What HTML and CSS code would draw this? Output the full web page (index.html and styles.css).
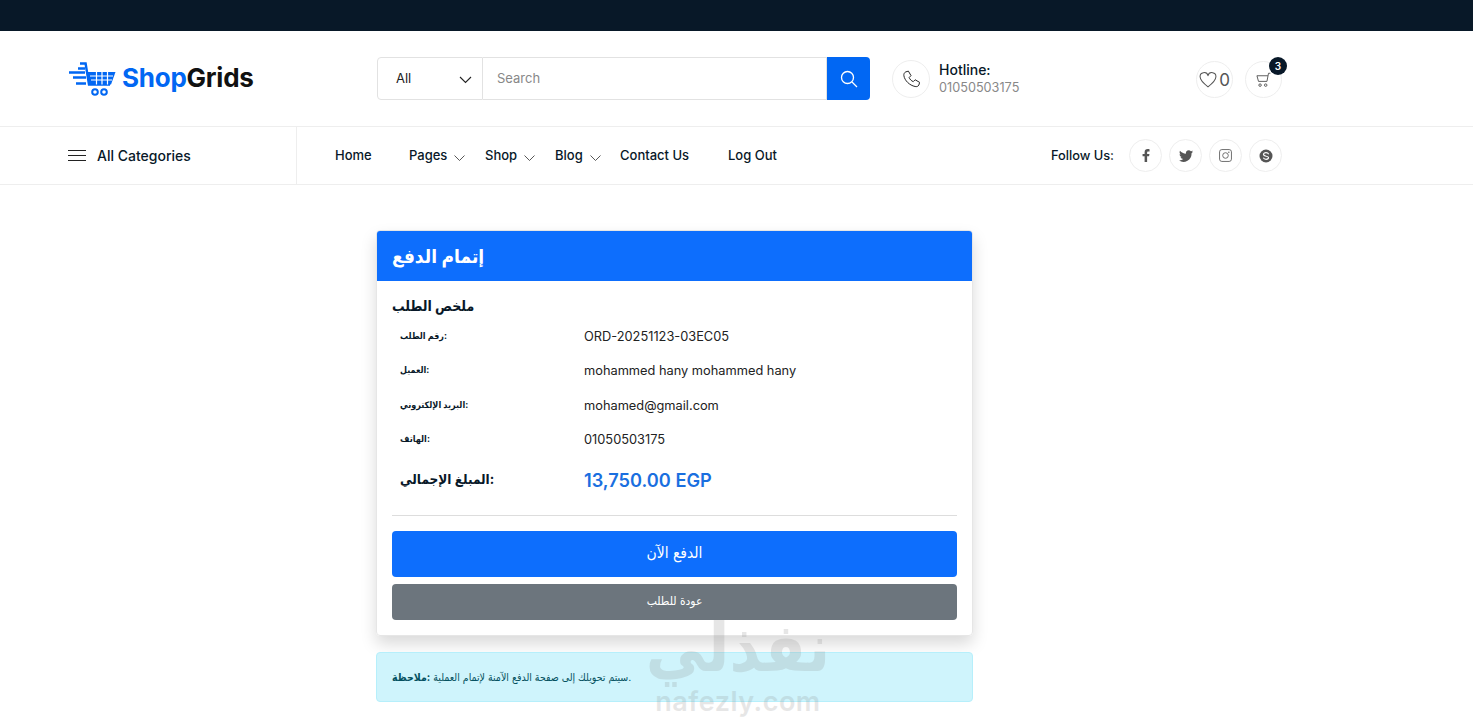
FILE: index.html
```html
<!DOCTYPE html>
<html lang="ar">
<head>
    <meta charset="UTF-8">
    <meta name="viewport" content="width=device-width, initial-scale=1.0">
    <title>ShopGrids</title>
    <link rel="stylesheet" href="styles.css">
</head>
<body>
    <div class="topbar"></div>

    <header class="header-middle">
        <a class="logo" href="#">
            <svg class="logo-cart" width="47" height="35" viewBox="0 0 47 35" fill="none">
                <path d="M11 1.500h5.600L20 22.500h21" stroke="#0167f3" stroke-width="2.400"/>
                <path d="M18 10h28.500L42 22.500H20.500z" fill="#0167f3"/>
                <path d="M21 14h23M22 18h21M27.500 10v12.500M33 10v12.500M38.500 10v12.500" stroke="#fff" stroke-width="1.200"/>
                <path d="M9 6.500h7M0 10.500h16M4 15.500h13M7 21.500h10" stroke="#0167f3" stroke-width="2.400"/>
                <circle cx="26" cy="30" r="2.800" stroke="#0167f3" stroke-width="2"/>
                <circle cx="35" cy="30" r="2.800" stroke="#0167f3" stroke-width="2"/>
            </svg>
            <span class="logo-text"><span class="logo-blue">Shop</span>Grids</span>
        </a>

        <form class="search">
            <div class="search-select">
                <span>All</span>
                <svg class="select-arrow" width="13" height="8" viewBox="0 0 13 8" fill="none"><path d="M1 1l5.500 5.500L12 1" stroke="#222" stroke-width="1.100"/></svg>
            </div>
            <input class="search-input" type="text" placeholder="Search">
            <button class="search-btn" type="button" aria-label="Search">
                <svg width="18" height="18" viewBox="0 0 18 18" fill="none"><circle cx="7.500" cy="7.500" r="6" stroke="#fff" stroke-width="1.300"/><path d="M12 12l5 5" stroke="#fff" stroke-width="1.300"/></svg>
            </button>
        </form>

        <div class="hotline">
            <span class="circle circle-lg">
                <svg width="18" height="18" viewBox="0 0 24 24" fill="none"><path d="M5 2.500l3.500-1 3.500 6-2.500 2.500c1 2.500 3 4.500 5.500 5.500l2.500-2.500 6 3.500-1 3.500c-1 2-3 2.500-5 2C10 20.500 3.500 14 2.500 7.500 2.200 5.500 3 3.500 5 2.500z" stroke="#222" stroke-width="1.300" stroke-linejoin="round"/></svg>
            </span>
            <div class="hotline-text">
                <div class="hotline-title">Hotline:</div>
                <div class="hotline-number">01050503175</div>
            </div>
        </div>

        <div class="header-actions">
            <a class="circle circle-md" href="#">
                <svg width="18" height="16" viewBox="0 0 24 22" fill="none"><path d="M12 20.500C5 15 1.200 11.500 1.200 7A5.500 5.500 0 0 1 12 5a5.500 5.500 0 0 1 10.800 2c0 4.500-3.800 8-10.800 13.500z" stroke="#555" stroke-width="1.400" stroke-linejoin="round"/></svg>
                <span class="wish-count">0</span>
            </a>
            <a class="circle circle-md cart" href="#">
                <svg width="15" height="15" viewBox="0 0 24 24" fill="none"><path d="M23 2h-3l-2.500 13H4L1.500 6H19" stroke="#555" stroke-width="1.500"/><circle cx="6.500" cy="21" r="2" stroke="#555" stroke-width="1.500"/><circle cx="15.500" cy="21" r="2" stroke="#555" stroke-width="1.500"/></svg>
                <span class="badge">3</span>
            </a>
        </div>
    </header>

    <nav class="navbar">
        <div class="all-cats">
            <span class="burger"><i></i><i></i><i></i></span>
            All Categories
        </div>
        <ul class="menu">
            <li class="w-home"><a href="#">Home</a></li>
            <li class="w-pages"><a href="#">Pages</a><svg class="caret" width="11" height="6" viewBox="0 0 11 6" fill="none"><path d="M.5.500l5 5 5-5" stroke="#444" stroke-width=".9"/></svg></li>
            <li class="w-shop"><a href="#">Shop</a><svg class="caret" width="11" height="6" viewBox="0 0 11 6" fill="none"><path d="M.5.500l5 5 5-5" stroke="#444" stroke-width=".9"/></svg></li>
            <li class="w-blog"><a href="#">Blog</a><svg class="caret" width="11" height="6" viewBox="0 0 11 6" fill="none"><path d="M.5.500l5 5 5-5" stroke="#444" stroke-width=".9"/></svg></li>
            <li class="w-contact"><a href="#">Contact Us</a></li>
            <li><a href="#">Log Out</a></li>
        </ul>
        <div class="follow">
            <span class="follow-label">Follow Us:</span>
            <a class="circle circle-sm" href="#">
                <svg width="8" height="13" viewBox="0 0 8 14"><path d="M5.200 14V7.800h2.100l.4-2.500H5.200V3.800c0-.8.300-1.200 1.300-1.200h1.300V.300C7.500.200 6.700 0 5.800 0 3.800 0 2.500 1.200 2.500 3.400v1.900H.3v2.500h2.200V14z" fill="#555"/></svg>
            </a>
            <a class="circle circle-sm" href="#">
                <svg width="14" height="12" viewBox="0 0 24 20"><path d="M24 2.400c-.9.400-1.800.7-2.800.8 1-.6 1.800-1.600 2.200-2.700-1 .6-2 1-3.100 1.200A4.900 4.900 0 0 0 11.900 6C7.800 5.800 4.200 3.800 1.700.9.400 3.100 1 6 3.200 7.500c-.8 0-1.600-.2-2.200-.6 0 2.300 1.600 4.400 3.900 4.900-.7.200-1.500.2-2.200.1.600 2 2.400 3.400 4.600 3.400A9.900 9.900 0 0 1 0 17.800 14 14 0 0 0 21.500 5.400c1-.7 1.800-1.600 2.500-3z" fill="#555"/></svg>
            </a>
            <a class="circle circle-sm" href="#">
                <svg width="13" height="13" viewBox="0 0 14 14" fill="none"><rect x=".6" y=".6" width="12.800" height="12.800" rx="2.500" stroke="#666" stroke-width="1"/><circle cx="7" cy="7" r="3" stroke="#666" stroke-width="1"/><circle cx="10.600" cy="3.400" r=".8" fill="#666"/></svg>
            </a>
            <a class="circle circle-sm" href="#">
                <svg width="14" height="14" viewBox="0 0 14 14"><circle cx="7" cy="7" r="6.500" fill="#555"/><path d="M9.700 5.200C9.200 4.200 8.100 3.700 7 3.700 5.500 3.700 4.500 4.500 4.500 5.600c0 2.200 5 1.100 5 3 0 1-1.100 1.700-2.400 1.700-1.300 0-2.300-.6-2.800-1.500" stroke="#fff" stroke-width="1.200" fill="none"/></svg>
            </a>
        </div>
    </nav>

    <main class="checkout">
        <section class="card">
            <h3 class="card-header">إتمام الدفع</h3>
            <div class="card-body">
                <h5 class="summary-title">ملخص الطلب</h5>
                <table class="summary">
                    <tr><th>رقم الطلب:</th><td>ORD-20251123-03EC05</td></tr>
                    <tr><th>العميل:</th><td>mohammed hany mohammed hany</td></tr>
                    <tr><th>البريد الإلكتروني:</th><td>mohamed@gmail.com</td></tr>
                    <tr><th>الهاتف:</th><td>01050503175</td></tr>
                    <tr class="total"><th>المبلغ الإجمالي:</th><td>13,750.00 EGP</td></tr>
                </table>
                <hr class="divider">
                <button class="btn btn-pay" type="button">الدفع الآن</button>
                <button class="btn btn-back" type="button">عودة للطلب</button>
            </div>
        </section>

        <div class="alert"><strong>ملاحظة:</strong> سيتم تحويلك إلى صفحة الدفع الآمنة لإتمام العملية.</div>
    </main>

    <div class="watermark">
        <div class="wm-ar">نفذلي</div>
        <div class="wm-en">nafezly.com</div>
    </div>
</body>
</html>
```

FILE: styles.css
```css
* {
    box-sizing: border-box;
}

body {
    margin: 0;
    height: 717px;
    overflow: hidden;
    position: relative;
    font-family: Inter, "DejaVu Sans Condensed", "DejaVu Sans", sans-serif;
    color: #081828;
    background: #fff;
}

a {
    color: inherit;
    text-decoration: none;
}

.topbar {
    height: 31px;
    background-color: #081828;
}

/* Middle header */
.header-middle {
    height: 96px;
    padding: 0 191px 0 68px;
    display: flex;
    align-items: center;
    border-bottom: 1px solid #eee;
}

.logo {
    width: 309px;
    padding-left: 1px;
    display: flex;
    align-items: center;
    gap: 6px;
    flex-shrink: 0;
}

.logo-cart {
    margin-top: 2px;
}

.logo-text {
    font-size: 26px;
    line-height: 30px;
    font-weight: 700;
    color: #111;
    letter-spacing: -0.25px;
    margin-bottom: 2px;
}

.logo-blue {
    color: #0167f3;
}

.search {
    width: 493px;
    height: 43px;
    display: flex;
    flex-shrink: 0;
}

.search-select {
    width: 106px;
    padding: 0 10px 2px 18px;
    display: flex;
    align-items: center;
    justify-content: space-between;
    border: 1px solid #e2e2e2;
    border-radius: 4px 0 0 4px;
    font-size: 13px;
    color: #222;
}

.select-arrow {
    margin-top: 5px;
}

.search-input {
    flex: 1;
    min-width: 0;
    padding: 0 14px 2px;
    border: 1px solid #e2e2e2;
    border-left: none;
    font-family: inherit;
    font-size: 13px;
    outline: none;
}

.search-input::placeholder {
    color: #888;
}

.search-btn {
    width: 43px;
    border: none;
    border-radius: 0 4px 4px 0;
    background-color: #0167f3;
    display: flex;
    align-items: center;
    justify-content: center;
}

.circle {
    border: 1px solid #eee;
    border-radius: 50%;
    display: flex;
    align-items: center;
    justify-content: center;
    flex-shrink: 0;
}

.circle-lg {
    width: 38px;
    height: 38px;
}

.circle-md {
    width: 37px;
    height: 37px;
}

.circle-sm {
    width: 33px;
    height: 33px;
}

.hotline {
    margin-left: 22px;
    display: flex;
    align-items: center;
    gap: 9px;
}

.hotline-text {
    margin-top: 1px;
}

.hotline-title {
    font-size: 14px;
    font-weight: 500;
    line-height: 18px;
}

.hotline-number {
    font-size: 12.700px;
    line-height: 18px;
    color: #888;
}

.header-actions {
    margin-left: auto;
    display: flex;
    gap: 12px;
    margin-top: 2px;
}

.wish-count {
    font-size: 17px;
    color: #555;
    margin-left: 2px;
}

.cart {
    position: relative;
}

.badge {
    position: absolute;
    top: -5px;
    right: -6px;
    width: 18px;
    height: 18px;
    border-radius: 50%;
    background-color: #081828;
    color: #fff;
    font-size: 10px;
    font-weight: 600;
    display: flex;
    align-items: center;
    justify-content: center;
}

/* Nav row */
.navbar {
    height: 58px;
    padding: 0 191px 0 68px;
    display: flex;
    align-items: center;
    border-bottom: 1px solid #eee;
}

.all-cats {
    width: 229px;
    height: 100%;
    display: flex;
    align-items: center;
    gap: 11px;
    border-right: 1px solid #eee;
    font-size: 14px;
    font-weight: 500;
}

.burger {
    width: 18px;
    display: flex;
    flex-direction: column;
    gap: 4px;
}

.burger i {
    height: 1px;
    background-color: #222;
}

.menu {
    list-style: none;
    margin: 0 0 2px;
    padding: 0 0 0 38px;
    display: flex;
    font-size: 13px;
    font-weight: 500;
}

.menu li {
    display: flex;
    align-items: center;
    gap: 7px;
}

.caret {
    margin-top: 7px;
}

.w-home { width: 74px; }
.w-pages { width: 76px; }
.w-shop { width: 70px; }
.w-blog { width: 65px; }
.w-contact { width: 108px; }

.follow {
    margin-left: auto;
    display: flex;
    align-items: center;
    gap: 7px;
}

.follow-label {
    font-size: 12.800px;
    font-weight: 500;
    margin-right: 8px;
}

/* Checkout */
.checkout {
    width: 597px;
    margin: 45px 0 0 376px;
}

.card {
    border: 1px solid #e6e6e6;
    border-radius: 4px;
    overflow: hidden;
    height: 406px;
    box-shadow: 0 8px 16px rgba(0, 0, 0, 0.15);
}

.card-header {
    margin: 0;
    height: 50px;
    padding: 0 15px;
    display: flex;
    align-items: center;
    background-color: #0d6efd;
    color: #fff;
    font-size: 19px;
    font-weight: 700;
}

.card-body {
    padding: 15px;
}

.summary-title {
    margin: 0 0 3px;
    font-size: 14px;
    line-height: 20px;
    font-weight: 700;
}

.summary {
    width: 100%;
    border-collapse: collapse;
}

.summary th {
    width: 192px;
    height: 34.500px;
    padding: 0 8px 2px;
    text-align: left;
    font-size: 9px;
    font-weight: 700;
}

.summary td {
    padding: 0;
    font-size: 12.800px;
    color: #222;
}

.total th {
    height: 45px;
    font-size: 13.500px;
}

.total td {
    font-size: 18.200px;
    font-weight: 600;
    color: #1a6fe0;
}

.divider {
    margin: 13px 0 15px;
    border: none;
    border-top: 1px solid #ddd;
}

.btn {
    display: block;
    width: 100%;
    border: none;
    border-radius: 4px;
    color: #fff;
    font-family: inherit;
}

.btn-pay {
    height: 46px;
    padding-bottom: 4px;
    background-color: #0d6efd;
    font-size: 15.500px;
}

.btn-back {
    height: 36px;
    margin-top: 7px;
    padding-bottom: 5px;
    background-color: #6c757d;
    font-size: 12px;
}

.alert {
    margin-top: 16px;
    height: 50px;
    padding: 0 15px;
    display: flex;
    align-items: center;
    gap: 3px;
    background-color: #cff4fc;
    border: 1px solid #b6effb;
    border-radius: 4px;
    color: #055160;
    font-size: 10.500px;
}

/* Site watermark sits over the page */
.watermark {
    position: absolute;
    left: 618px;
    top: 612px;
    width: 240px;
    text-align: center;
    color: #888;
    opacity: 0.2;
    pointer-events: none;
}

.wm-ar {
    font-size: 67px;
    line-height: 70px;
    font-weight: 700;
}

.wm-en {
    font-size: 27px;
    line-height: 32px;
    margin-top: 4px;
    font-weight: 600;
    letter-spacing: 0.5px;
}
```
